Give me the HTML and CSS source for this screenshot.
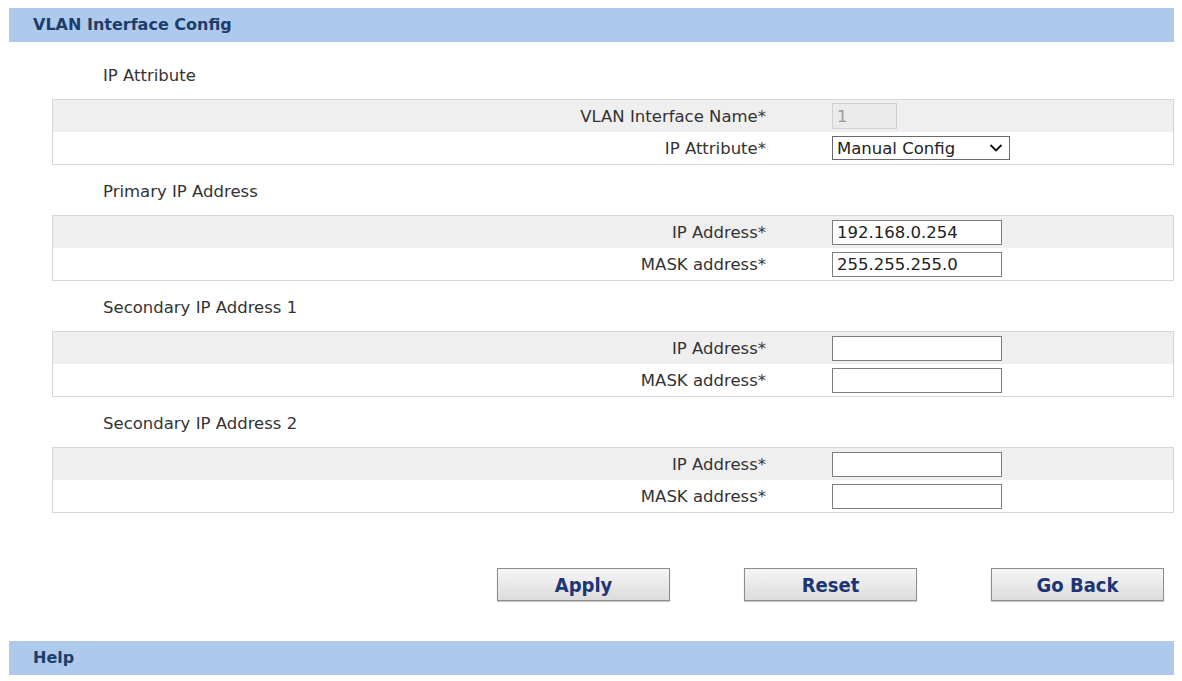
FILE: index.html
```html
<!DOCTYPE html>
<html lang="en">
<head>
    <meta charset="UTF-8">
    <title>VLAN Interface Config</title>
    <link rel="stylesheet" href="styles.css">
</head>
<body>
    <div class="page">
        <div class="bar">VLAN Interface Config</div>

        <div class="form">
            <div class="section-title">IP Attribute</div>
            <div class="table">
                <div class="row gray">
                    <label class="label">VLAN Interface Name*</label>
                    <div class="field"><input class="input short" type="text" value="1" disabled></div>
                </div>
                <div class="row">
                    <label class="label">IP Attribute*</label>
                    <div class="field">
                        <div class="select-wrap">
                            <select class="select">
                                <option>Manual Config</option>
                                <option>DHCP</option>
                            </select>
                            <svg class="chevron" width="14" height="10" viewBox="0 0 14 10">
                                <path d="M1.5 2 L7 7.5 L12.5 2" fill="none" stroke="#111" stroke-width="1.8"/>
                            </svg>
                        </div>
                    </div>
                </div>
            </div>

            <div class="section-title">Primary IP Address</div>
            <div class="table">
                <div class="row gray">
                    <label class="label">IP Address*</label>
                    <div class="field"><input class="input" type="text" value="192.168.0.254"></div>
                </div>
                <div class="row">
                    <label class="label">MASK address*</label>
                    <div class="field"><input class="input" type="text" value="255.255.255.0"></div>
                </div>
            </div>

            <div class="section-title">Secondary IP Address 1</div>
            <div class="table">
                <div class="row gray">
                    <label class="label">IP Address*</label>
                    <div class="field"><input class="input" type="text"></div>
                </div>
                <div class="row">
                    <label class="label">MASK address*</label>
                    <div class="field"><input class="input" type="text"></div>
                </div>
            </div>

            <div class="section-title">Secondary IP Address 2</div>
            <div class="table">
                <div class="row gray">
                    <label class="label">IP Address*</label>
                    <div class="field"><input class="input" type="text"></div>
                </div>
                <div class="row">
                    <label class="label">MASK address*</label>
                    <div class="field"><input class="input" type="text"></div>
                </div>
            </div>
        </div>

        <div class="buttons">
            <button class="btn">Apply</button>
            <button class="btn">Reset</button>
            <button class="btn">Go Back</button>
        </div>

        <div class="bar">Help</div>
    </div>
</body>
</html>
```

FILE: styles.css
```css
body {
    margin: 0;
    background-color: #ffffff;
    font-family: "DejaVu Sans", Verdana, sans-serif;
    font-size: 16.5px;
    color: #333333;
}
.page {
    padding: 8px 8px 0 9px;
}
.bar {
    height: 34px;
    line-height: 34px;
    padding-left: 24px;
    background-color: #adc9ec;
    color: #1d3d6b;
    font-weight: bold;
    font-size: 16px;
}
.form {
    padding-top: 7px;
    padding-left: 43px;
}
.section-title {
    padding: 15px 0 11px 51px;
    line-height: 24px;
    color: #333333;
}
.table {
    border: 1px solid #d6d6d6;
}
.row {
    display: grid;
    grid-template-columns: 713px 1fr;
    column-gap: 66px;
    align-items: center;
    height: 32px;
}
.row.gray {
    background-color: #efefef;
}
.label {
    text-align: right;
    color: #333333;
}
.field {
    display: flex;
    align-items: center;
}
.input {
    box-sizing: border-box;
    width: 170px;
    height: 25px;
    padding: 0 4px;
    border: 1px solid #7d7d7d;
    font-family: "DejaVu Sans", Verdana, sans-serif;
    font-size: 16.5px;
    color: #222222;
    background-color: #ffffff;
}
.input.short {
    width: 65px;
    height: 26px;
    border-color: #cfcfcf;
    background-color: #ebebeb;
    color: #999999;
}
.select-wrap {
    position: relative;
    width: 178px;
    height: 24px;
}
.select {
    appearance: none;
    -webkit-appearance: none;
    box-sizing: border-box;
    width: 178px;
    height: 24px;
    padding: 0 4px;
    border: 1px solid #6b6b6b;
    border-radius: 0;
    background-color: #ffffff;
    font-family: "DejaVu Sans", Verdana, sans-serif;
    font-size: 16.5px;
    color: #222222;
}
.chevron {
    position: absolute;
    right: 7px;
    top: 7px;
    pointer-events: none;
}
.buttons {
    display: flex;
    justify-content: flex-end;
    gap: 74px;
    padding: 55px 10px 40px 0;
}
.btn {
    width: 173px;
    height: 33px;
    border: 1px solid #8c8c8c;
    background: linear-gradient(#f6f6f6, #dcdcdc);
    box-shadow: 0 1px 1px rgba(0, 0, 0, 0.2);
    color: #1d3575;
    font-family: "DejaVu Sans Condensed", "DejaVu Sans", sans-serif;
    font-weight: bold;
    font-size: 20px;
    cursor: pointer;
}
```
